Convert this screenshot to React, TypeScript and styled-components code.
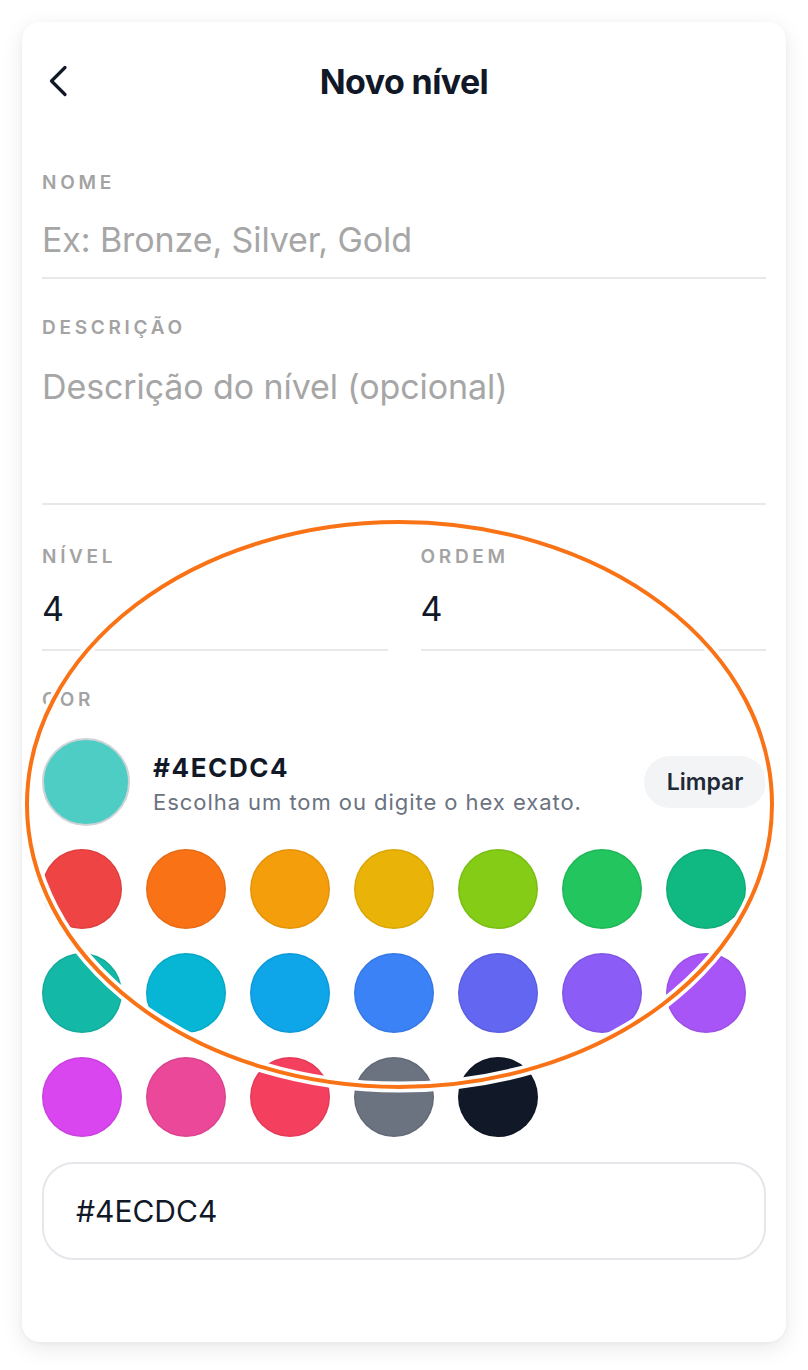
import React from "react";
import styled, { createGlobalStyle } from "styled-components";

const GlobalStyle = createGlobalStyle`
  html, body {
    margin: 0;
    padding: 0;
    background: #ffffff;
  }
  body {
    font-family: Inter, "Noto Sans", "Liberation Sans", sans-serif;
    -webkit-font-smoothing: antialiased;
  }
  * { box-sizing: border-box; }
`;

const Page = styled.div`
  position: relative;
  width: 808px;
  height: 1370px;
  padding: 22px;
`;

const Card = styled.div`
  height: 1320px;
  background: #ffffff;
  border-radius: 18px;
  box-shadow: 0 6px 22px rgba(0, 0, 0, 0.09), 0 1px 4px rgba(0, 0, 0, 0.04);
  padding: 0 20px;
  display: flex;
  flex-direction: column;
`;

const Header = styled.header`
  height: 118px;
  display: grid;
  grid-template-columns: 1fr auto 1fr;
  align-items: center;
`;

const BackButton = styled.button`
  justify-self: start;
  width: 40px;
  height: 40px;
  margin-left: 6px;
  padding: 0;
  border: none;
  background: transparent;
  display: flex;
  align-items: center;
  justify-content: flex-start;
  color: #111827;
`;

const Title = styled.h1`
  margin: 0;
  font-size: 34px;
  font-weight: 700;
  letter-spacing: -0.6px;
  color: #111827;
`;

const Field = styled.div<{ $top: number }>`
  margin-top: ${(p) => p.$top}px;
  display: flex;
  flex-direction: column;
  border-bottom: 2px solid #e8e8e8;
`;

const Label = styled.div<{ $gap?: number }>`
  font-size: 19px;
  line-height: 24px;
  font-weight: 600;
  letter-spacing: 3.7px;
  text-transform: uppercase;
  color: #a3a3a3;
  margin-bottom: ${(p) => p.$gap ?? 0}px;
`;

const TextInput = styled.input<{ $pad: number }>`
  width: 100%;
  min-width: 0;
  border: none;
  outline: none;
  padding: 0 0 ${(p) => p.$pad}px 0;
  margin: 0;
  font-family: inherit;
  font-size: 34px;
  line-height: 44px;
  height: ${(p) => 44 + p.$pad}px;
  color: #111827;
  background: transparent;
  letter-spacing: -0.1px;
  &::placeholder { color: #a6a6a6; }
`;

const TextArea = styled.textarea`
  width: 100%;
  border: none;
  outline: none;
  resize: none;
  padding: 0;
  margin: 0;
  font-family: inherit;
  font-size: 34px;
  line-height: 44px;
  height: 138px;
  color: #111827;
  background: transparent;
  letter-spacing: -0.1px;
  &::placeholder { color: #a6a6a6; }
`;

const Row = styled.div`
  margin-top: 40px;
  display: grid;
  grid-template-columns: minmax(0, 1fr) minmax(0, 1fr);
  column-gap: 33px;
`;

const RowField = styled.div`
  min-width: 0;
  display: flex;
  flex-direction: column;
  border-bottom: 2px solid #e8e8e8;
`;

const ColorSection = styled.section`
  margin-top: 37px;
  display: flex;
  flex-direction: column;
`;

const ColorHead = styled.div`
  margin-top: 26px;
  display: flex;
  align-items: center;
  gap: 23px;
`;

const BigSwatch = styled.div<{ $color: string }>`
  width: 88px;
  height: 88px;
  border-radius: 50%;
  background: ${(p) => p.$color};
  border: 2px solid #cdd3d6;
  flex-shrink: 0;
`;

const ColorInfo = styled.div`
  flex: 1;
  display: flex;
  flex-direction: column;
  gap: 5px;
  padding-top: 4px;
`;

const HexTitle = styled.div`
  font-size: 26px;
  line-height: 30px;
  font-weight: 700;
  letter-spacing: 1.6px;
  color: #111827;
`;

const HexHint = styled.div`
  font-size: 22px;
  line-height: 28px;
  color: #6b7280;
  letter-spacing: 0.95px;
`;

const ClearButton = styled.button`
  width: 122px;
  height: 52px;
  border: none;
  border-radius: 26px;
  background: #f3f4f6;
  font-family: inherit;
  font-size: 23px;
  font-weight: 600;
  color: #1f2937;
  padding: 0;
  flex-shrink: 0;
`;

const Palette = styled.div`
  margin-top: 23px;
  display: flex;
  flex-wrap: wrap;
  gap: 24px;
`;

const Dot = styled.button<{ $color: string }>`
  width: 80px;
  height: 80px;
  border-radius: 50%;
  border: none;
  padding: 0;
  background: ${(p) => p.$color};
  box-shadow: inset 0 0 0 1.5px rgba(0, 0, 0, 0.07);
`;

const HexField = styled.input`
  margin-top: 25px;
  height: 98px;
  border: 2px solid #e5e7eb;
  border-radius: 32px;
  padding: 0 32px;
  font-family: inherit;
  font-size: 30px;
  color: #111827;
  outline: none;
  background: #fff;
`;

const Overlay = styled.svg`
  position: absolute;
  left: 0;
  top: 0;
  pointer-events: none;
`;

const COLORS = [
  "#ef4444", "#f97316", "#f59e0b", "#eab308", "#84cc16", "#22c55e", "#10b981",
  "#14b8a6", "#06b6d4", "#0ea5e9", "#3b82f6", "#6366f1", "#8b5cf6", "#a855f7",
  "#d946ef", "#ec4899", "#f43f5e", "#6b7280", "#111827",
];

export default function App() {
  return (
    <>
      <GlobalStyle />
      <Page>
        <Card>
          <Header>
            <BackButton aria-label="Voltar">
              <svg width="20" height="32" viewBox="0 0 20 32" fill="none">
                <polyline
                  points="17,2.5 3.5,16 17,29.5"
                  stroke="#111827"
                  strokeWidth="3.2"
                  strokeLinecap="round"
                  strokeLinejoin="round"
                />
              </svg>
            </BackButton>
            <Title>Novo nível</Title>
            <div />
          </Header>

          <Field $top={31}>
            <Label $gap={22}>Nome</Label>
            <TextInput $pad={16} placeholder="Ex: Bronze, Silver, Gold" />
          </Field>

          <Field $top={37}>
            <Label $gap={25}>Descrição</Label>
            <TextArea placeholder="Descrição do nível (opcional)" />
          </Field>

          <Row>
            <RowField>
              <Label $gap={17}>Nível</Label>
              <TextInput $pad={19} defaultValue="4" />
            </RowField>
            <RowField>
              <Label $gap={17}>Ordem</Label>
              <TextInput $pad={19} defaultValue="4" />
            </RowField>
          </Row>

          <ColorSection>
            <Label>Cor</Label>
            <ColorHead>
              <BigSwatch $color="#4ECDC4" />
              <ColorInfo>
                <HexTitle>#4ECDC4</HexTitle>
                <HexHint>Escolha um tom ou digite o hex exato.</HexHint>
              </ColorInfo>
              <ClearButton>Limpar</ClearButton>
            </ColorHead>
            <Palette>
              {COLORS.map((c) => (
                <Dot key={c} $color={c} aria-label={c} />
              ))}
            </Palette>
            <HexField defaultValue="#4ECDC4" />
          </ColorSection>
        </Card>
        <Overlay width="808" height="1370" viewBox="0 0 808 1370">
          <ellipse cx="399.5" cy="804.5" rx="372.5" ry="282.5" fill="none" stroke="#ffffff" strokeWidth="11" />
          <ellipse cx="399.5" cy="804.5" rx="372.5" ry="282.5" fill="none" stroke="#f97316" strokeWidth="4" />
        </Overlay>
      </Page>
    </>
  );
}
